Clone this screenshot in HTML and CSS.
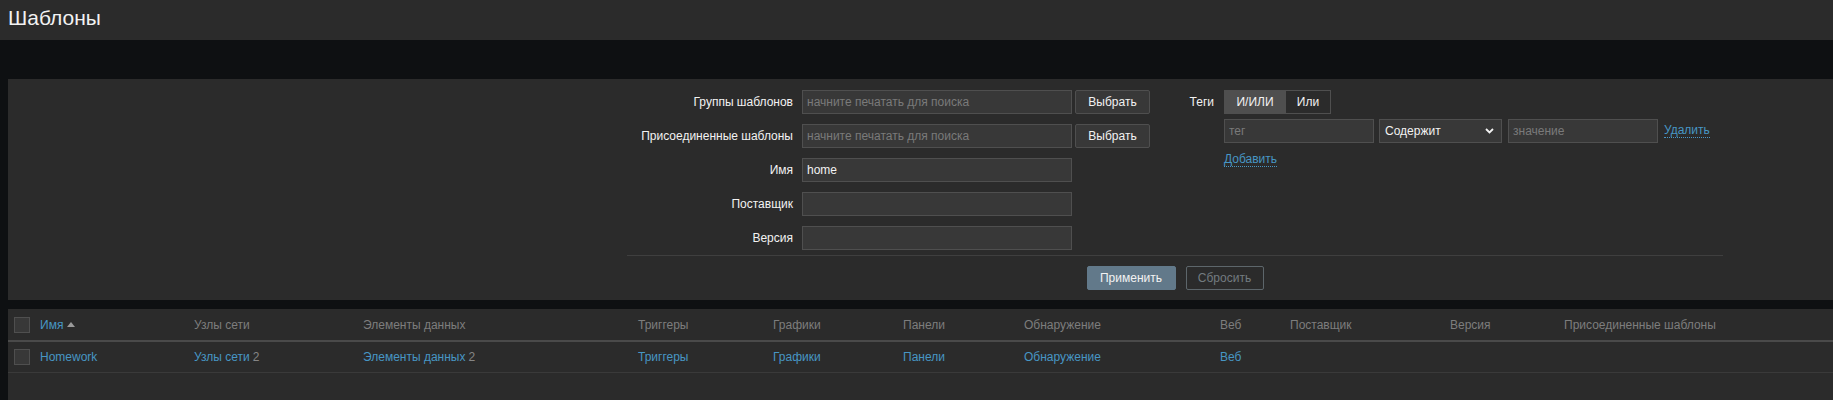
FILE: index.html
```html
<!DOCTYPE html>
<html lang="ru">
<head>
<meta charset="utf-8">
<title>Шаблоны</title>
<link rel="stylesheet" href="styles.css">
</head>
<body>
<header class="page-header">
  <h1 class="page-title">Шаблоны</h1>
</header>
<main class="content">
  <section class="filter">
    <div class="filter-body">
      <div class="filter-cols">
        <div class="form-col">
          <div class="form-row">
            <label class="form-label">Группы шаблонов</label>
            <input class="text-input" type="text" placeholder="начните печатать для поиска">
            <button class="btn-grey" type="button">Выбрать</button>
          </div>
          <div class="form-row">
            <label class="form-label">Присоединенные шаблоны</label>
            <input class="text-input" type="text" placeholder="начните печатать для поиска">
            <button class="btn-grey" type="button">Выбрать</button>
          </div>
          <div class="form-row">
            <label class="form-label">Имя</label>
            <input class="text-input" type="text" value="home">
          </div>
          <div class="form-row">
            <label class="form-label">Поставщик</label>
            <input class="text-input" type="text">
          </div>
          <div class="form-row">
            <label class="form-label">Версия</label>
            <input class="text-input" type="text">
          </div>
        </div>
        <div class="tags-col">
          <label class="tags-label">Теги</label>
          <div class="tag-field">
            <div class="segmented">
              <span class="seg seg-on">И/ИЛИ</span>
              <span class="seg seg-off">Или</span>
            </div>
            <div class="tag-row">
              <input class="tag-input" type="text" placeholder="тег">
              <div class="select">
                <span>Содержит</span>
                <svg class="chev" width="9" height="6" viewBox="0 0 9 6"><path d="M1 1 L4.5 4.5 L8 1" fill="none" stroke="#f2f2f2" stroke-width="1.8"/></svg>
              </div>
              <input class="tag-input" type="text" placeholder="значение">
              <a class="link-dotted" href="#">Удалить</a>
            </div>
            <a class="link-dotted add-link" href="#">Добавить</a>
          </div>
        </div>
      </div>
      <div class="filter-sep"></div>
      <div class="filter-actions">
        <button class="btn-apply" type="button">Применить</button>
        <button class="btn-reset" type="button">Сбросить</button>
      </div>
    </div>
  </section>

  <section class="list">
    <div class="row row-head">
      <div class="cell cell-cb"><span class="checkbox"></span></div>
      <div class="cell"><a class="link" href="#">Имя</a><span class="sort-arrow"></span></div>
      <div class="cell">Узлы сети</div>
      <div class="cell">Элементы данных</div>
      <div class="cell">Триггеры</div>
      <div class="cell">Графики</div>
      <div class="cell">Панели</div>
      <div class="cell">Обнаружение</div>
      <div class="cell">Веб</div>
      <div class="cell">Поставщик</div>
      <div class="cell">Версия</div>
      <div class="cell">Присоединенные шаблоны</div>
    </div>
    <div class="row row-data">
      <div class="cell cell-cb"><span class="checkbox"></span></div>
      <div class="cell"><a class="link" href="#">Homework</a></div>
      <div class="cell"><a class="link" href="#">Узлы сети</a> <span class="count">2</span></div>
      <div class="cell"><a class="link" href="#">Элементы данных</a> <span class="count">2</span></div>
      <div class="cell"><a class="link" href="#">Триггеры</a></div>
      <div class="cell"><a class="link" href="#">Графики</a></div>
      <div class="cell"><a class="link" href="#">Панели</a></div>
      <div class="cell"><a class="link" href="#">Обнаружение</a></div>
      <div class="cell"><a class="link" href="#">Веб</a></div>
      <div class="cell"></div>
      <div class="cell"></div>
      <div class="cell"></div>
    </div>
  </section>
</main>
</body>
</html>
```

FILE: styles.css
```css
html, body {
  margin: 0;
  padding: 0;
}

body {
  background: #0e1012;
  color: #f2f2f2;
  font-family: "Liberation Sans", Arial, sans-serif;
  font-size: 12px;
  overflow: hidden;
}

.page-header {
  height: 40px;
  box-sizing: border-box;
  background: #2b2b2b;
  padding: 6px 8px 0;
}

.page-title {
  margin: 0;
  font-size: 21px;
  font-weight: normal;
  line-height: 24px;
  color: #f2f2f2;
}

/* ---------- filter ---------- */
.filter {
  margin: 39px 0 0 8px;
  background: #2b2b2b;
  padding: 11px 0 10px;
}

.filter-body {
  margin-left: 619px;
  width: 1096px;
}

.filter-cols {
  display: flex;
  align-items: flex-start;
}

.form-col {
  display: flex;
  flex-direction: column;
  gap: 10px;
}

.form-row {
  display: flex;
  align-items: center;
  height: 24px;
}

.form-label {
  flex: none;
  width: 166px;
  margin-right: 9px;
  text-align: right;
  color: #f2f2f2;
}

.text-input,
.tag-input {
  box-sizing: border-box;
  height: 24px;
  margin: 0;
  padding: 0 4px;
  background: #383838;
  border: 1px solid #4f4f4f;
  border-radius: 0;
  color: #f2f2f2;
  font-family: "Liberation Sans", Arial, sans-serif;
  font-size: 12px;
  outline: none;
}

.text-input {
  width: 270px;
}

.tag-input {
  width: 150px;
}

.text-input::placeholder,
.tag-input::placeholder {
  color: #7a7a7a;
}

.btn-grey {
  box-sizing: border-box;
  width: 75px;
  height: 24px;
  margin: 0 0 0 3px;
  padding: 0;
  background: #383838;
  border: 1px solid #4f4f4f;
  border-radius: 2px;
  color: #f2f2f2;
  font-family: "Liberation Sans", Arial, sans-serif;
  font-size: 12px;
}

.tags-col {
  display: flex;
  align-items: flex-start;
  margin-left: 14px;
}

.tags-label {
  flex: none;
  width: 50px;
  margin-right: 10px;
  line-height: 24px;
  text-align: right;
}

.tag-field {
  display: flex;
  flex-direction: column;
  align-items: flex-start;
}

.segmented {
  display: flex;
  height: 24px;
}

.seg {
  box-sizing: border-box;
  height: 24px;
  line-height: 22px;
  text-align: center;
  border: 1px solid #4f4f4f;
  color: #f2f2f2;
}

.seg-on {
  width: 62px;
  background: #4f4f4f;
}

.seg-off {
  width: 45px;
  background: #2b2b2b;
  border-left: none;
}

.tag-row {
  display: flex;
  align-items: center;
  margin-top: 5px;
  height: 24px;
}

.select {
  box-sizing: border-box;
  width: 123px;
  height: 24px;
  margin: 0 6px 0 5px;
  padding: 0 7px 0 5px;
  display: flex;
  align-items: center;
  justify-content: space-between;
  background: #383838;
  border: 1px solid #4f4f4f;
  color: #f2f2f2;
}

.chev {
  display: block;
}

.link-dotted {
  color: #4796c4;
  text-decoration: none;
  border-bottom: 1px dotted #4796c4;
  line-height: 13px;
}

.tag-row .link-dotted {
  margin-left: 6px;
}

.add-link {
  margin-top: 10px;
}

.filter-sep {
  margin-top: 5px;
  border-top: 1px solid #3f3f3f;
}

.filter-actions {
  display: flex;
  justify-content: center;
  gap: 10px;
  margin-top: 10px;
}

.btn-apply,
.btn-reset {
  box-sizing: border-box;
  height: 24px;
  margin: 0;
  padding: 0;
  border-radius: 2px;
  font-family: "Liberation Sans", Arial, sans-serif;
  font-size: 12px;
}

.btn-apply {
  width: 89px;
  background: #62798a;
  border: 1px solid #62798a;
  color: #f2f2f2;
}

.btn-reset {
  width: 78px;
  background: transparent;
  border: 1px solid #5d666b;
  color: #737b80;
}

/* ---------- list ---------- */
.list {
  margin: 9px 0 0 8px;
  background: #2b2b2b;
  min-height: 200px;
}

.row {
  display: grid;
  grid-template-columns: 27px 154px 169px 275px 135px 130px 121px 196px 70px 160px 114px 1fr;
  align-items: center;
}

.row-head {
  height: 31px;
  border-bottom: 2px solid #4a4a4a;
  color: #7d7d7d;
}

.row-data {
  height: 30px;
  border-bottom: 1px solid #3a3a3a;
}

.cell {
  padding-left: 5px;
  white-space: nowrap;
  display: flex;
  align-items: center;
}

.cell-cb {
  padding-left: 6px;
}

.checkbox {
  display: block;
  box-sizing: border-box;
  width: 16px;
  height: 16px;
  background: #383838;
  border: 1px solid #4f4f4f;
}

.link {
  color: #4796c4;
  text-decoration: none;
}

.count {
  color: #858585;
  margin-left: 3px;
}

.sort-arrow {
  display: inline-block;
  width: 0;
  height: 0;
  margin-left: 4px;
  border-left: 4px solid transparent;
  border-right: 4px solid transparent;
  border-bottom: 5px solid #9a9a9a;
}
```
